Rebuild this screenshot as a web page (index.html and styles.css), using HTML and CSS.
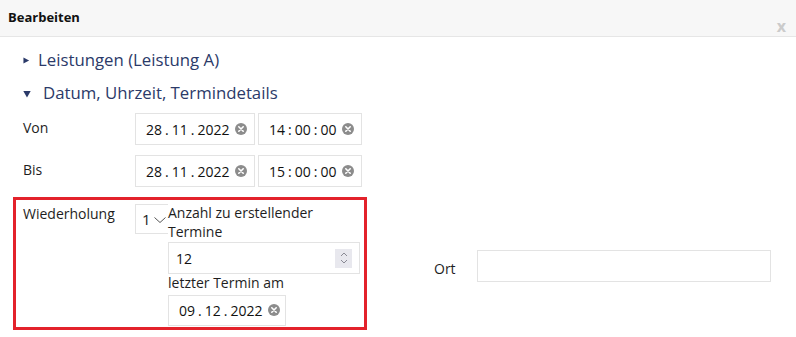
FILE: index.html
```html
<!DOCTYPE html>
<html lang="de">
<head>
  <meta charset="UTF-8">
  <meta name='viewport' content='width=device-width, initial-scale=1' />
  <title>Bearbeiten</title>
  <link rel="stylesheet" href="styles.css">
</head>
<body>

  <div class="Dialog">
    <div class="Dialog__head">
      <span class="Dialog__title">Bearbeiten</span>
      <span class="Dialog__close">x</span>
    </div>

    <div class="Dialog__body">
      <div class="Section Section--closed">
        <svg class="Section__arrow" viewBox="0 0 8 8"><path d="M0.5 0.5L7 4 0.5 7.5z"/></svg>
        <span class="Section__title">Leistungen (Leistung A)</span>
      </div>
      <div class="Section Section--open">
        <svg class="Section__arrow" viewBox="0 0 8 8"><path d="M0.3 1L7.7 1 4 7.5z"/></svg>
        <span class="Section__title">Datum, Uhrzeit, Termindetails</span>
      </div>

      <div class="Row">
        <label class="Row__label">Von</label>
        <div class="Field Field--date">
          <span class="Seg">28</span><span class="Sep">.</span><span class="Seg">11</span><span class="Sep">.</span><span class="Seg">2022</span>
          <svg class="Clear" viewBox="0 0 12 12"><circle cx="6" cy="6" r="6"/><path d="M3.8 3.8l4.4 4.4M8.2 3.8l-4.4 4.4"/></svg>
        </div>
        <div class="Field Field--time">
          <span class="Seg">14</span><span class="Sep">:</span><span class="Seg">00</span><span class="Sep">:</span><span class="Seg">00</span>
          <svg class="Clear" viewBox="0 0 12 12"><circle cx="6" cy="6" r="6"/><path d="M3.8 3.8l4.4 4.4M8.2 3.8l-4.4 4.4"/></svg>
        </div>
      </div>

      <div class="Row">
        <label class="Row__label">Bis</label>
        <div class="Field Field--date">
          <span class="Seg">28</span><span class="Sep">.</span><span class="Seg">11</span><span class="Sep">.</span><span class="Seg">2022</span>
          <svg class="Clear" viewBox="0 0 12 12"><circle cx="6" cy="6" r="6"/><path d="M3.8 3.8l4.4 4.4M8.2 3.8l-4.4 4.4"/></svg>
        </div>
        <div class="Field Field--time">
          <span class="Seg">15</span><span class="Sep">:</span><span class="Seg">00</span><span class="Sep">:</span><span class="Seg">00</span>
          <svg class="Clear" viewBox="0 0 12 12"><circle cx="6" cy="6" r="6"/><path d="M3.8 3.8l4.4 4.4M8.2 3.8l-4.4 4.4"/></svg>
        </div>
      </div>

      <div class="Repeat">
        <div class="Repeat__box">
          <label class="Repeat__label">Wiederholung</label>
          <div class="Select">
            <span>1</span>
            <svg class="Select__chevron" viewBox="0 0 12 6"><path d="M0.5 0.5l5.5 5 5.5-5"/></svg>
          </div>
          <div class="Repeat__col">
            <div class="Repeat__text">Anzahl zu erstellender Termine</div>
            <div class="Field Field--number">
              <span>12</span>
              <span class="Spin">
                <svg viewBox="0 0 8 16"><path d="M1 6l3-3 3 3M1 10l3 3 3-3"/></svg>
              </span>
            </div>
            <div class="Repeat__text">letzter Termin am</div>
            <div class="Field Field--last">
              <span class="Seg">09</span><span class="Sep">.</span><span class="Seg">12</span><span class="Sep">.</span><span class="Seg">2022</span>
              <svg class="Clear" viewBox="0 0 12 12"><circle cx="6" cy="6" r="6"/><path d="M3.8 3.8l4.4 4.4M8.2 3.8l-4.4 4.4"/></svg>
            </div>
          </div>
        </div>

        <div class="Place">
          <label class="Place__label">Ort</label>
          <div class="Field Field--place"></div>
        </div>
      </div>
    </div>
  </div>

</body>
</html>
```

FILE: styles.css
```css
*,
*::before,
*::after {
  box-sizing: border-box;
}
html, body {
  margin: 0;
  padding: 0;
  background: #fff;
}
body {
  font-family: "Open Sans", "Liberation Sans", sans-serif;
  font-size: 14px;
  color: #1e1e1e;
}

.Dialog__head {
  display: flex;
  height: 37px;
  padding: 0 0 0 8px;
  align-items: center;
  background-color: #f7f7f7;
  border-bottom: 1px solid #e6e6e6;
}
.Dialog__title {
  font-size: 13px;
  font-weight: 700;
  color: #111;
  margin-top: -2px;
}
.Dialog__close {
  margin-left: auto;
  margin-right: 10px;
  align-self: flex-end;
  margin-bottom: 2px;
  font-size: 16px;
  font-weight: 700;
  line-height: 16px;
  color: #cbcbcb;
}

.Dialog__body {
  padding: 12px 0 0 23px;
}

.Section {
  display: flex;
  align-items: center;
  height: 22px;
  color: #2b3a69;
  font-size: 16.8px;
  line-height: 22px;
}
.Section + .Section {
  margin-top: 11px;
}
.Section__arrow {
  width: 7px;
  height: 7px;
  margin-right: 8px;
  margin-top: 1px;
  fill: #2b3a69;
}
.Section--open .Section__arrow {
  width: 8px;
  height: 8px;
  margin-right: 12px;
}

.Row {
  display: flex;
}
.Section + .Row {
  margin-top: 9px;
}
.Row + .Row {
  margin-top: 10px;
}
.Row__label {
  width: 112px;
  padding-top: 5px;
  line-height: 19px;
}

.Field {
  display: flex;
  align-items: center;
  height: 32px;
  border: 1px solid #e3e3e3;
  background: #fff;
  font-size: 14px;
  color: #111;
}
.Field--date {
  width: 120px;
  padding-left: 10px;
}
.Field--time {
  width: 104px;
  margin-left: 3px;
  padding-left: 10px;
}
.Sep {
  margin: 0 3px;
}
.Clear {
  width: 12px;
  height: 12px;
  margin-left: 6px;
}
.Clear circle {
  fill: #8c8c8c;
}
.Clear path {
  stroke: #fff;
  stroke-width: 1.6;
  stroke-linecap: round;
}

.Repeat {
  display: flex;
  align-items: flex-start;
  margin-top: 10px;
  margin-left: -10px;
}
.Repeat__box {
  display: flex;
  align-items: flex-start;
  width: 354px;
  height: 133px;
  padding: 4px 0 0 7px;
  border: 3px solid #e3222b;
}
.Repeat__label {
  width: 112px;
  line-height: 19px;
}
.Select {
  display: flex;
  align-items: center;
  width: 33px;
  height: 30px;
  padding-left: 6px;
  border: 1px solid #e3e3e3;
  border-right: none;
  font-size: 15px;
}
.Select__chevron {
  width: 12px;
  height: 6px;
  margin-left: 3px;
  margin-top: 2px;
  fill: none;
  stroke: #555;
  stroke-width: 1;
}
.Repeat__col {
  width: 192px;
}
.Repeat__text {
  line-height: 18.5px;
  width: 170px;
}
.Field--number {
  width: 192px;
  margin-top: 1px;
  padding: 0 7px;
  justify-content: space-between;
}
.Spin {
  display: flex;
  align-items: center;
  justify-content: center;
  width: 17px;
  height: 19px;
  background: #e8e8ee;
}
.Spin svg {
  width: 8px;
  height: 16px;
  fill: none;
  stroke: #8a8a94;
  stroke-width: 1;
}
.Field--last {
  width: 118px;
  height: 31px;
  margin-top: 2px;
  padding-left: 10px;
}

.Place {
  display: flex;
  align-items: center;
  margin-top: 53px;
  margin-left: 67px;
}
.Place__label {
  width: 43px;
  margin-top: 4px;
}
.Field--place {
  width: 294px;
  height: 32px;
}
```
